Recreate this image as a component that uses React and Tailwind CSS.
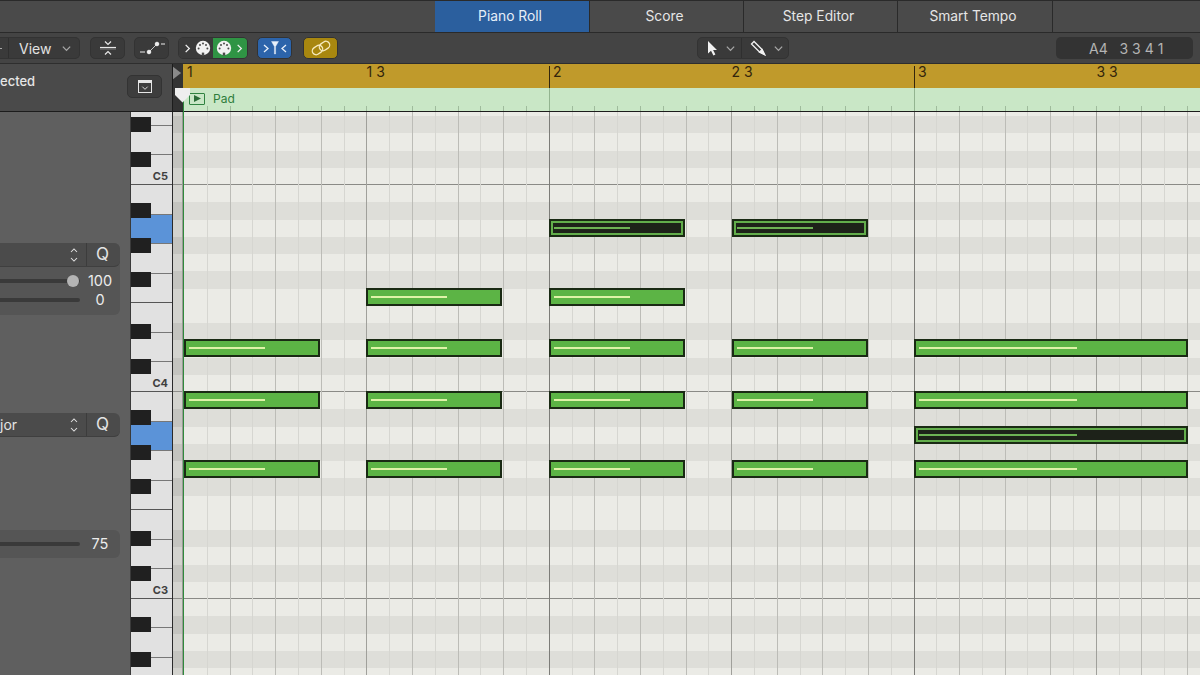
import React from 'react'

const SEMI = 17.25
const OCTAVE = [true, false, true, false, false, true, false, true, false, true, false, false]

// rows from D#5 downwards, the first one starts at y=116
const rows = Array.from({ length: 33 }, (_, i) => ({
  dark: OCTAVE[i % 12],
  cLine: i % 12 === 3,
}))

const whiteKeys = [
  { h: 'h-[13.9px]' }, { h: 'h-[29.57px]' }, { h: 'h-[29.57px]', label: 'C5', line: true },
  { h: 'h-[29.57px]' }, { h: 'h-[29.57px]', active: true }, { h: 'h-[29.57px]' }, { h: 'h-[29.57px]', line: true },
  { h: 'h-[29.57px]' }, { h: 'h-[29.57px]' }, { h: 'h-[29.57px]', label: 'C4', line: true },
  { h: 'h-[29.57px]' }, { h: 'h-[29.57px]', active: true }, { h: 'h-[29.57px]' }, { h: 'h-[29.57px]', line: true },
  { h: 'h-[29.57px]' }, { h: 'h-[29.57px]' }, { h: 'h-[29.57px]', label: 'C3', line: true },
  { h: 'h-[29.57px]' }, { h: 'h-[29.57px]' }, { h: 'h-[29.57px]' },
]

const gridLines = Array.from({ length: 45 }, (_, i) => i + 1)

// row = semitones below the C5 line, x and w in grid pixels
const notes = [
  { row: 2, x: 366, w: 136, sel: true },
  { row: 2, x: 549, w: 136, sel: true },
  { row: 6, x: 183, w: 136 },
  { row: 6, x: 366, w: 136 },
  { row: 9, x: 1, w: 136 },
  { row: 9, x: 183, w: 136 },
  { row: 9, x: 366, w: 136 },
  { row: 9, x: 549, w: 136 },
  { row: 9, x: 731, w: 274 },
  { row: 12, x: 1, w: 136 },
  { row: 12, x: 183, w: 136 },
  { row: 12, x: 366, w: 136 },
  { row: 12, x: 549, w: 136 },
  { row: 12, x: 731, w: 274 },
  { row: 14, x: 731, w: 274, sel: true },
  { row: 16, x: 1, w: 136 },
  { row: 16, x: 183, w: 136 },
  { row: 16, x: 366, w: 136 },
  { row: 16, x: 549, w: 136 },
  { row: 16, x: 731, w: 274 },
]

function Chevron({ className = 'w-[10px] h-[10px]', dir = 'down', color = '#a8a8a8' }) {
  const pts = {
    down: '2,4 6,8 10,4',
    up: '2,8 6,4 10,8',
    right: '4,2 8,6 4,10',
    left: '8,2 4,6 8,10',
  }
  return (
    <svg viewBox="0 0 12 12" className={className} fill="none" stroke={color} strokeWidth="1.4">
      <polyline points={pts[dir]} />
    </svg>
  )
}

function MidiIcon() {
  return (
    <svg viewBox="0 0 16 16" className="w-[16px] h-[16px]">
      <circle cx="8" cy="8" r="7.2" fill="#f2f2f2" />
      <rect x="6.8" y="12.6" width="2.4" height="3" fill="#4a4a4a" />
      <g fill="#4a4a4a">
        <circle cx="3.6" cy="8.4" r="1" />
        <circle cx="5" cy="5" r="1" />
        <circle cx="8" cy="3.6" r="1" />
        <circle cx="11" cy="5" r="1" />
        <circle cx="12.4" cy="8.4" r="1" />
      </g>
    </svg>
  )
}

function Note({ x, row, w, sel }) {
  return (
    <div
      className={sel
        ? 'absolute box-border border-2 border-[#1a2a14] bg-[#62ad4b] p-[2px]'
        : 'absolute box-border border-2 border-[#1a2a14] bg-[#5cb445]'}
      style={{ left: x, top: 72 + row * SEMI, width: w, height: 18 }}
    >
      {sel && <div className="w-full h-full bg-[#1d2219]" />}
      <div
        className={sel ? 'absolute left-[3px] top-[6px] h-[2px] bg-[#6db254]' : 'absolute left-[3px] top-[6px] h-[2px] bg-[#dff3a8]'}
        style={{ width: w > 200 ? 158 : 76 }}
      />
    </div>
  )
}

function SliderRow({ value, knob }) {
  return (
    <div className="flex items-center h-[19px]">
      <div className="relative w-[80px] h-[4px] rounded-r-full bg-[#3a3a3a]">
        {knob && <div className="absolute right-[1px] top-[-4px] w-[12px] h-[12px] rounded-full bg-[#b4b4b4]" />}
      </div>
      <span className="ml-[3px] w-[34px] text-center text-[14.5px] text-[#ececec]">{value}</span>
    </div>
  )
}

function DropdownRow({ label }) {
  return (
    <div className="flex items-center h-[24px] rounded-r-md bg-[#4b4b4b] border-b border-[#3f3f3f]">
      <span className="text-[14px] text-[#e4e4e4]">{label}</span>
      <div className="ml-auto flex flex-col items-center w-[12px] mr-[6px]">
        <Chevron dir="up" color="#e4e4e4" className="w-[12px] h-[9px]" />
        <Chevron dir="down" color="#e4e4e4" className="w-[12px] h-[9px]" />
      </div>
      <div className="flex items-center justify-center w-[34px] h-full pr-[2px] border-l border-[#3c3c3c] text-[17px] text-[#e4e4e4]">Q</div>
    </div>
  )
}

function ToolButton({ children, className = 'bg-[#3a3a3a]' }) {
  return (
    <div className={`flex items-center justify-center w-[35px] h-[22px] rounded-[5px] border border-[#333333] ${className}`}>
      {children}
    </div>
  )
}

export default function App() {
  return (
    <div className="relative w-[1200px] h-[675px] overflow-hidden flex flex-col bg-[#5f5f5f] font-['Inter',sans-serif]">
      {/* tabs */}
      <div className="flex h-[33px] pl-[435px] bg-[#4a4a4a] border-t border-b border-[#2a2a2a]">
        <div className="flex items-center justify-center w-[155px] pr-[4px] bg-[#2b5f9e] border-r border-[#2a2a2a] text-[13.8px] text-[#e6eef8]">Piano Roll</div>
        <div className="flex items-center justify-center w-[154px] pr-[4px] border-r border-[#2a2a2a] text-[13.8px] text-[#e6e6e6]">Score</div>
        <div className="flex items-center justify-center w-[154px] pr-[4px] border-r border-[#2a2a2a] text-[13.8px] text-[#e6e6e6]">Step Editor</div>
        <div className="flex items-center justify-center w-[155px] pr-[4px] border-r border-[#2a2a2a] text-[13.8px] text-[#e6e6e6]">Smart Tempo</div>
      </div>

      {/* toolbar */}
      <div className="flex items-center h-[31px] bg-[#444444] border-b border-[#2e2e2e]">
        <div className="flex items-center w-[80px] h-[22px] rounded-r-[5px] bg-[#3a3a3a] border border-l-0 border-[#333333]">
          <div className="flex items-center w-[9px] h-full border-r border-[#2f2f2f]">
            <div className="w-[2px] h-px bg-[#a8a8a8]" />
          </div>
          <span className="ml-[10px] text-[14px] text-[#e2e2e2]">View</span>
          <Chevron className="ml-[10px] w-[11px] h-[11px]" />
        </div>
        <ToolButton className="ml-[10px] bg-[#3a3a3a]">
          <svg viewBox="0 0 20 16" className="w-[20px] h-[16px]" fill="none" stroke="#e8e8e8" strokeWidth="1.2">
            <polyline points="7,1.5 10,4.5 13,1.5" />
            <line x1="2" y1="7.5" x2="18" y2="7.5" />
            <line x1="2" y1="9" x2="18" y2="9" stroke="#8c8c8c" strokeWidth="0.8" />
            <polyline points="7,14.5 10,11.5 13,14.5" />
          </svg>
        </ToolButton>
        <ToolButton className="ml-[9px] bg-[#3a3a3a]">
          <svg viewBox="0 0 28 16" className="w-[28px] h-[16px]" fill="#eeeeee" stroke="#eeeeee" strokeWidth="1">
            <line x1="2" y1="12" x2="7" y2="12" />
            <line x1="11" y1="12" x2="19" y2="4" strokeWidth="0.8" />
            <line x1="23" y1="4" x2="27" y2="4" />
            <circle cx="11" cy="12" r="1.8" />
            <circle cx="19" cy="4" r="1.8" />
          </svg>
        </ToolButton>
        <div className="flex ml-[9px] w-[70px] h-[22px] rounded-[5px] overflow-hidden border border-[#333333]">
          <div className="flex items-center justify-center gap-[2px] w-1/2 bg-[#3a3a3a]">
            <Chevron dir="right" color="#f0f0f0" className="w-[11px] h-[11px]" />
            <MidiIcon />
          </div>
          <div className="flex items-center justify-center gap-[2px] w-1/2 bg-[#2f9444]">
            <MidiIcon />
            <Chevron dir="right" color="#f0f0f0" className="w-[11px] h-[11px]" />
          </div>
        </div>
        <ToolButton className="ml-[9px] bg-[#2c64ab]">
          <svg viewBox="0 0 28 16" className="w-[28px] h-[16px]" fill="none" stroke="#e8f0fa" strokeWidth="1.3">
            <polyline points="3,5 7,8.5 3,12" />
            <polyline points="25,5 21,8.5 25,12" />
            <path d="M10.5 1.5 H17.5 L14.6 6.5 V14 H13.4 V6.5 Z" fill="#e8f0fa" strokeWidth="0.4" />
          </svg>
        </ToolButton>
        <ToolButton className="ml-[11px] bg-[#a8870f]">
          <svg viewBox="0 0 24 16" className="w-[24px] h-[16px]" fill="none" stroke="#f7ecc0" strokeWidth="1.3">
            <rect x="3" y="6.2" width="11" height="7.6" rx="3.8" transform="rotate(-35 8.5 10)" />
            <rect x="10" y="2.2" width="11" height="7.6" rx="3.8" transform="rotate(-35 15.5 6)" />
          </svg>
        </ToolButton>
        <div className="flex items-center ml-[359px] w-[92px] h-[22px] rounded-[5px] bg-[#3a3a3a] border border-[#333333]">
          <svg viewBox="0 0 16 16" className="ml-[7px] w-[16px] h-[16px]" fill="#f2f2f2">
            <path d="M3 1 L3 13.5 L6 10.8 L8.4 15.5 L10.4 14.5 L8.1 10 L12 10 Z" />
          </svg>
          <Chevron className="ml-[4px] w-[11px] h-[11px]" />
          <div className="ml-[5px] w-px h-full bg-[#2f2f2f]" />
          <svg viewBox="0 0 16 16" className="ml-[8px] w-[16px] h-[16px]" fill="none" stroke="#f2f2f2" strokeWidth="1.3">
            <path d="M1.5 4 L4 1.5 L12 9.5 L14.5 14.5 L9.5 12 Z" />
            <path d="M12 9.5 L14.5 14.5 L9.5 12 Z" fill="#f2f2f2" />
          </svg>
          <Chevron className="ml-[7px] w-[11px] h-[11px]" />
        </div>
        <div className="flex items-center ml-[267px] w-[137px] h-[22px] pl-[33px] rounded-[5px] bg-[#333333] text-[14px] text-[#b4b4b4] whitespace-pre">
          A4   3 3 4 1
        </div>
      </div>

      {/* header strip: inspector title, ruler, region */}
      <div className="flex h-[48px]">
        <div className="flex items-start w-[172px] h-full pr-[10px] bg-[#4a4a4a] border-b border-[#1c1c1c]">
          <span className="mt-[8px] text-[13px] font-medium text-[#e6e6e6]">ected</span>
          <div className="ml-auto mt-[11px] flex items-center justify-center w-[35px] h-[23px] rounded-[5px] bg-[#3d3d3d] border border-[#333333]">
            <div className="flex items-center justify-center w-[14px] h-[13px] bg-[#e6e6e6] pt-[2px]">
              <div className="flex items-center justify-center w-[12px] h-[9px] bg-[#3d3d3d]">
                <Chevron color="#e6e6e6" className="w-[8px] h-[8px]" />
              </div>
            </div>
          </div>
        </div>
        <div className="w-[11px] h-full bg-[#333333] border-b border-[#1c1c1c] border-l border-l-[#1c1c1c] pt-[2px]">
          <svg viewBox="0 0 10 14" className="w-[9px] h-[14px]">
            <polygon points="0,0 9,7 0,14" fill="#8a8a8a" />
          </svg>
        </div>
        <div className="flex flex-col flex-1 min-w-0">
          <div className="flex h-[24px] pl-px bg-[#c09a2b] text-[14px] text-[#33250c] overflow-hidden">
            <div className="flex-none w-[182.5px] pl-[3px] leading-[16px]">1</div>
            <div className="flex-none w-[182.5px] leading-[16px]">1 3</div>
            <div className="flex-none w-[182.5px] mt-[2px] pl-[3px] leading-[12px] border-l border-[#33250c]">2</div>
            <div className="flex-none w-[182.5px] leading-[16px]">2 3</div>
            <div className="flex-none w-[182.5px] mt-[2px] pl-[3px] leading-[12px] border-l border-[#33250c]">3</div>
            <div className="flex-none w-[182.5px] leading-[16px]">3 3</div>
          </div>
          <div className="relative flex items-center flex-1 pl-[6px] bg-[#c9e7c6] border-b border-[#1c1c1c]">
            <div className="absolute inset-0 pl-[2px] flex overflow-hidden">
              {gridLines.map((i) => (
                <div key={i} className="relative flex-none w-[22.81px]">
                  <div className={i % 16 === 0 ? 'absolute right-0 bottom-0 w-px h-full bg-[#93b490]' : 'absolute right-0 bottom-0 w-px h-[5px] bg-[#9fbb9c]'} />
                </div>
              ))}
            </div>
            <div className="relative flex items-center justify-center w-[16px] h-[12px] -mt-[2px] border border-[#2f8240] rounded-[1px]">
              <svg viewBox="0 0 8 8" className="w-[7px] h-[7px]">
                <polygon points="0,0 8,4 0,8" fill="#2b6d38" />
              </svg>
            </div>
            <span className="relative ml-[8px] -mt-[2px] text-[12px] text-[#2f7d3c]">Pad</span>
          </div>
        </div>
      </div>

      {/* body */}
      <div className="flex flex-1 min-h-0">
        <div className="w-[130px] pr-[10px] pt-[131px] bg-[#5f5f5f]">
          <div className="rounded-r-md bg-[#555555] pb-[6px]">
            <DropdownRow label="" />
            <div className="pt-[4px]">
              <SliderRow value="100" knob />
              <SliderRow value="0" />
            </div>
          </div>
          <div className="mt-[98px]">
            <DropdownRow label="jor" />
          </div>
          <div className="mt-[93px] h-[28px] flex items-center rounded-r-md bg-[#555555]">
            <div className="w-full"><SliderRow value="75" /></div>
          </div>
        </div>

        {/* piano */}
        <div className="relative w-[42px] h-full overflow-hidden border-l border-[#3a3a3a]">
          <div className="flex flex-col">
            {whiteKeys.map((key, i) => (
              <div
                key={i}
                className={`${key.h} flex-none flex items-end justify-end pr-[4px] pb-[1px] border-b ${key.line ? 'border-[#555555]' : 'border-[#777777]'} ${key.active ? 'bg-[#5b93d8]' : 'bg-[#e1e1e1]'}`}
              >
                {key.label && <span className="text-[11px] font-bold leading-[14px] text-[#3f3f3f]">{key.label}</span>}
              </div>
            ))}
          </div>
          <div className="absolute inset-0 flex flex-col pt-[5px]">
            {rows.map((row, i) => (
              <div key={i} className="flex-none h-[17.25px]">
                {row.dark && <div className="w-[20px] h-[15px] bg-[#202020]" />}
              </div>
            ))}
          </div>
        </div>

        {/* scale strip */}
        <div className="flex flex-col w-[11px] h-full overflow-hidden border-l border-[#2a2a2a] border-r border-r-[#9a9a96]">
          <div className="flex-none h-[4px] bg-[#d3d3ce]" />
          {rows.map((row, i) => (
            <div
              key={i}
              className={`flex-none h-[17.25px] ${row.dark ? 'bg-[#c4c4bf]' : 'bg-[#d3d3ce]'} ${row.cLine ? 'border-b border-[#8e8e8a]' : ''}`}
            />
          ))}
        </div>

        {/* note grid */}
        <div className="relative flex-1 min-w-0 h-full overflow-hidden bg-[#ebebe6]">
          <div className="flex flex-col">
            <div className="flex-none h-[4px]" />
            {rows.map((row, i) => (
              <div
                key={i}
                className={`flex-none h-[17.25px] ${row.dark ? 'bg-[#deded9]' : 'bg-[#ebebe6]'} ${row.cLine ? 'border-b border-[#8a8a86]' : ''}`}
              />
            ))}
          </div>
          <div className="absolute inset-0 pl-[2px] flex">
            {gridLines.map((i) => (
              <div
                key={i}
                className={`flex-none w-[22.81px] border-r ${
                  i % 16 === 0 ? 'border-[#7c7c78]'
                    : i % 8 === 0 ? 'border-[#a0a09b]'
                      : i % 2 === 0 ? 'border-[#bcbcb7]'
                        : 'border-[#d6d6d1]'
                }`}
              />
            ))}
          </div>
          {notes.map((n) => <Note key={`${n.row}-${n.x}`} row={n.row} x={n.x} w={n.w} sel={n.sel} />)}
        </div>
      </div>

      {/* playhead */}
      <div className="absolute left-[183px] top-[100px] bottom-0 w-px bg-[#2f8a3c]" />
      <svg viewBox="0 0 15 15" className="absolute left-[175px] top-[88px] w-[15px] h-[15px]">
        <polygon points="0,0 15,0 15,7 7.5,14.5 0,7" fill="#eeeeee" />
      </svg>
    </div>
  )
}
